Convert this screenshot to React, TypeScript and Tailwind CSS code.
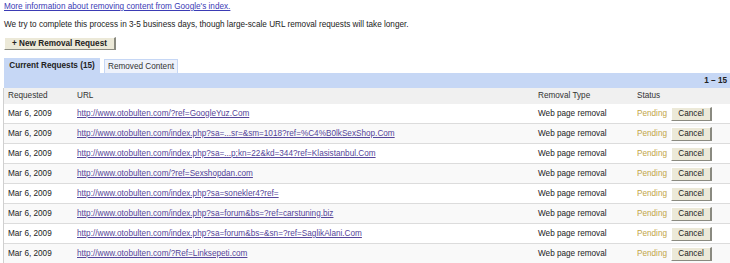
import React from 'react';

const rows = [
  'http://www.otobulten.com/?ref=GoogleYuz.Com',
  'http://www.otobulten.com/index.php?sa=...sr=&sm=1018?ref=%C4%B0lkSexShop.Com',
  'http://www.otobulten.com/index.php?sa=...p;kn=22&kd=344?ref=Klasistanbul.Com',
  'http://www.otobulten.com/?ref=Sexshopdan.com',
  'http://www.otobulten.com/index.php?sa=sonekler4?ref=',
  'http://www.otobulten.com/index.php?sa=forum&bs=?ref=carstuning.biz',
  'http://www.otobulten.com/index.php?sa=forum&bs=&sn=?ref=SaglikAlani.Com',
  'http://www.otobulten.com/?Ref=Linksepeti.com',
];

function CancelButton() {
  return (
    <button className="h-[14px] w-[41px] bg-[#ece9d8] border border-t-white border-l-white border-r-[#8a8a80] border-b-[#8a8a80] border-r-2 text-[8.2px] leading-[12px] text-[#222]">
      Cancel
    </button>
  );
}

export default function App() {
  return (
    <div
      className="w-[730px] h-[263px] overflow-hidden bg-white text-[8.2px] text-[#222]"
      style={{ fontFamily: '"Liberation Sans", Arial, sans-serif' }}
    >
      <div className="pl-[4px] pt-[2px]">
        {/* Info link */}
        <a href="#" className="block h-[10px] leading-[10px] text-[#3b3bb5] underline">
          More information about removing content from Google's index.
        </a>

        <p className="mt-[8px] h-[10px] leading-[10px]">
          We try to complete this process in 3-5 business days, though large-scale URL removal requests will take longer.
        </p>

        {/* New request */}
        <button className="mt-[7px] h-[13px] w-[112px] bg-[#ece9d8] border border-t-white border-l-white border-r-2 border-r-[#8a8a80] border-b-[#8a8a80] font-bold leading-[11px] text-[#222] text-[8.2px]">
          + New Removal Request
        </button>

        {/* Tabs */}
        <div className="mt-[8px] flex items-end gap-[4px] h-[15px]">
          <div className="h-[15px] w-[96px] bg-[#c6d7f5] flex items-center justify-center font-bold">
            Current Requests (15)
          </div>
          <div className="h-[14px] w-[74px] bg-[#eef2fb] border border-b-0 border-[#c6d7f5] flex items-center justify-center text-[#333]">
            Removed Content
          </div>
        </div>
      </div>

      {/* Paging bar */}
      <div className="ml-[4px] h-[15px] bg-[#c6d7f5] flex items-center justify-end pr-[3px] font-bold">
        1 – 15
      </div>

      {/* Table */}
      <div className="ml-[3px] border-l border-[#d0d0d0]">
        <div className="grid grid-cols-[69px_461px_100px_1fr] h-[16px] items-center bg-[#f0f0f0] text-[#333]">
          <div className="pl-[4px]">Requested</div>
          <div className="pl-[4px]">URL</div>
          <div className="pl-[4px]">Removal Type</div>
          <div className="pl-[3px]">Status</div>
        </div>
        {rows.map((url, i) => (
          <div
            key={i}
            className={`grid grid-cols-[69px_461px_100px_1fr] h-[20px] items-center border-b border-[#dcdcdc] ${
              i % 2 === 1 ? 'bg-[#f9f9f9]' : 'bg-white'
            }`}
          >
            <div className="pl-[4px]">Mar 6, 2009</div>
            <div className="pl-[4px]">
              <a href="#" className="text-[#55459a] underline">
                {url}
              </a>
            </div>
            <div className="pl-[4px]">Web page removal</div>
            <div className="pl-[3px] flex items-center gap-[4px]">
              <span className="text-[#c2a548]">Pending</span>
              <CancelButton />
            </div>
          </div>
        ))}
      </div>
    </div>
  );
}
